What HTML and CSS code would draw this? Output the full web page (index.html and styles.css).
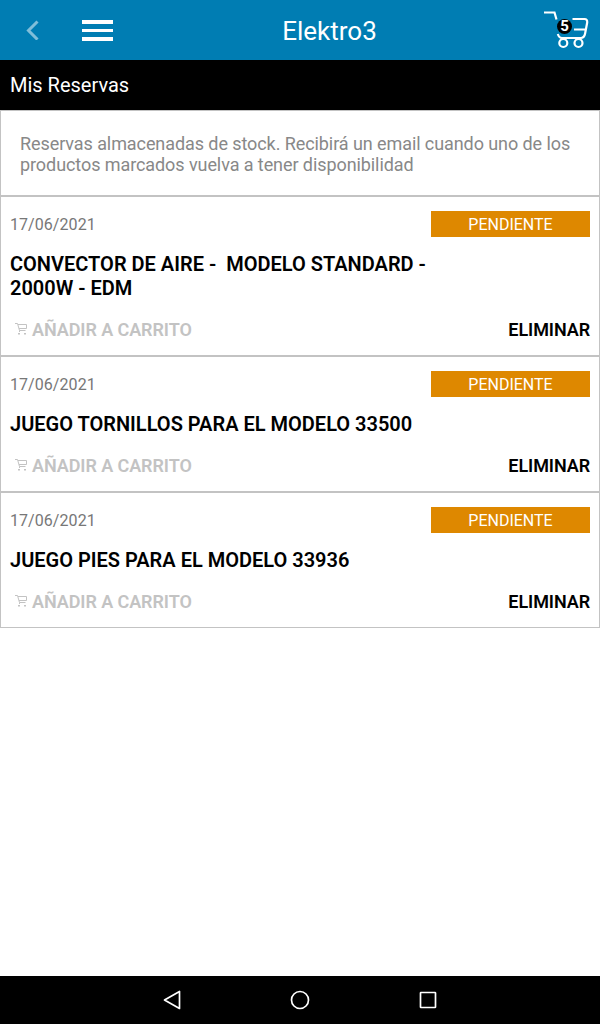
FILE: index.html
```html
<!DOCTYPE html>
<html lang="es">
<head>
    <meta charset="utf-8">
    <title>Elektro3 - Mis Reservas</title>
    <link rel="stylesheet" href="styles.css">
</head>
<body>
    <svg class="icon-defs">
        <symbol id="mini-cart" viewBox="0 0 14 14">
            <path d="M1 2.500h2.500l2 7h6M4 3.500h8.500v4H5M5.500 9.500v1.500" fill="none" stroke="currentColor" stroke-width="1"/>
            <path d="M4 12h2v1.500H4zM10 12h2v1.500h-2z" fill="currentColor"/>
        </symbol>
    </svg>

    <header class="topbar">
        <svg class="back" viewBox="0 0 14 20">
            <path d="M12.500 1.500L3.500 10.500l9 9" fill="none" stroke="currentColor" stroke-width="3"/>
        </svg>
        <div class="menu">
            <span></span>
            <span></span>
            <span></span>
        </div>
        <h1>Elektro3</h1>
        <div class="cart">
            <svg viewBox="0 0 46 38">
                <path d="M0 1.500h10.500l2 7" fill="none" stroke="currentColor" stroke-width="2.200"/>
                <path d="M28.500 8h12q3 0 2.700 3.500L41 23q-.8 4-4.500 4H18q-3 0-4.200-4M30 18.500h11.500" fill="none" stroke="currentColor" stroke-width="2.200"/>
                <circle cx="19.300" cy="32" r="4" fill="none" stroke="currentColor" stroke-width="2.200"/>
                <circle cx="34.500" cy="32" r="4" fill="none" stroke="currentColor" stroke-width="2.200"/>
            </svg>
            <span class="count">5</span>
        </div>
    </header>

    <h2 class="section-title">Mis Reservas</h2>

    <main>
        <p class="intro">Reservas almacenadas de stock. Recibirá un email cuando uno de los productos marcados vuelva a tener disponibilidad</p>

        <div class="item">
            <div class="row">
                <span class="date">17/06/2021</span>
                <span class="status">PENDIENTE</span>
            </div>
            <h3>CONVECTOR DE AIRE -&nbsp; MODELO STANDARD - 2000W - EDM</h3>
            <div class="row actions">
                <span class="add"><svg><use href="#mini-cart"/></svg>AÑADIR A CARRITO</span>
                <span class="remove">ELIMINAR</span>
            </div>
        </div>

        <div class="item">
            <div class="row">
                <span class="date">17/06/2021</span>
                <span class="status">PENDIENTE</span>
            </div>
            <h3>JUEGO TORNILLOS PARA EL MODELO 33500</h3>
            <div class="row actions">
                <span class="add"><svg><use href="#mini-cart"/></svg>AÑADIR A CARRITO</span>
                <span class="remove">ELIMINAR</span>
            </div>
        </div>

        <div class="item">
            <div class="row">
                <span class="date">17/06/2021</span>
                <span class="status">PENDIENTE</span>
            </div>
            <h3>JUEGO PIES PARA EL MODELO 33936</h3>
            <div class="row actions">
                <span class="add"><svg><use href="#mini-cart"/></svg>AÑADIR A CARRITO</span>
                <span class="remove">ELIMINAR</span>
            </div>
        </div>
    </main>

    <footer class="navbar">
        <svg viewBox="0 0 20 20"><path d="M17.500 1.500v17L2.500 10z"/></svg>
        <svg viewBox="0 0 20 20"><circle cx="10" cy="10" r="8.500"/></svg>
        <svg viewBox="0 0 20 20"><rect x="2.500" y="2.500" width="15" height="15" rx="0.500"/></svg>
    </footer>
</body>
</html>
```
FILE: styles.css
```css
* {
    box-sizing: border-box;
}

body {
    display: flex;
    flex-direction: column;
    height: 100vh;
    margin: 0;
    font-family: Roboto, sans-serif;
    background-color: #fff;
}

h1, h2, h3, p {
    margin: 0;
    font-weight: normal;
}

.icon-defs {
    display: none;
}

/* Header */
.topbar {
    display: flex;
    align-items: center;
    height: 60px;
    padding: 0 10px 0 25px;
    background-color: #007db3;
    color: #fff;
}

.back {
    width: 14px;
    height: 20px;
    color: #80bed9;
}

.menu {
    display: flex;
    flex-direction: column;
    gap: 5px;
    width: 31px;
    margin: 1px 0 0 43px;
}

.menu span {
    height: 3.5px;
    background-color: #fff;
}

.topbar h1 {
    flex: 1;
    margin-left: 2px;
    padding-top: 2px;
    text-align: center;
    font-size: 26px;
    line-height: 60px;
}

.cart {
    position: relative;
    width: 46px;
    height: 38px;
}

.cart svg {
    display: block;
    width: 46px;
    height: 38px;
}

.count {
    position: absolute;
    left: 13px;
    top: 8px;
    width: 15px;
    height: 15px;
    border-radius: 50%;
    background-color: #000;
    font-size: 15px;
    font-weight: bold;
    line-height: 15px;
    text-align: center;
}

.section-title {
    height: 50px;
    padding-left: 10px;
    background-color: #000;
    color: #fff;
    font-size: 20px;
    line-height: 50px;
}

/* Reservations */
main {
    flex: 1;
}

.intro {
    height: 86px;
    padding: 22px 19px;
    border: 1px solid #c3c3c3;
    color: #888;
    font-size: 18px;
    line-height: 21px;
    letter-spacing: -0.08px;
}

.item {
    padding: 14px 9px;
    border: 1px solid #c3c3c3;
}

.row {
    display: flex;
    align-items: center;
    justify-content: space-between;
}

.date {
    color: #777;
    font-size: 16px;
    letter-spacing: 0.06px;
}

.status {
    width: 159px;
    height: 26px;
    background-color: #de8800;
    color: #fff;
    font-size: 16px;
    line-height: 28px;
    text-align: center;
}

.item h3 {
    width: 420px;
    margin: 15px 0 18px;
    font-size: 20px;
    font-weight: 600;
    line-height: 24px;
}

.actions {
    height: 23px;
    font-size: 18px;
    font-weight: 600;
    letter-spacing: -0.08px;
}

.add {
    display: flex;
    align-items: center;
    color: #c3c3c3;
}

.add svg {
    width: 14px;
    height: 14px;
    margin: -4px 4px 0;
}

/* Android navigation */
.navbar {
    display: flex;
    justify-content: center;
    align-items: center;
    gap: 108px;
    height: 48px;
    background-color: #000;
}

.navbar svg {
    width: 20px;
    height: 20px;
    fill: none;
    stroke: #fff;
    stroke-width: 1.7;
    stroke-linejoin: round;
}
```
